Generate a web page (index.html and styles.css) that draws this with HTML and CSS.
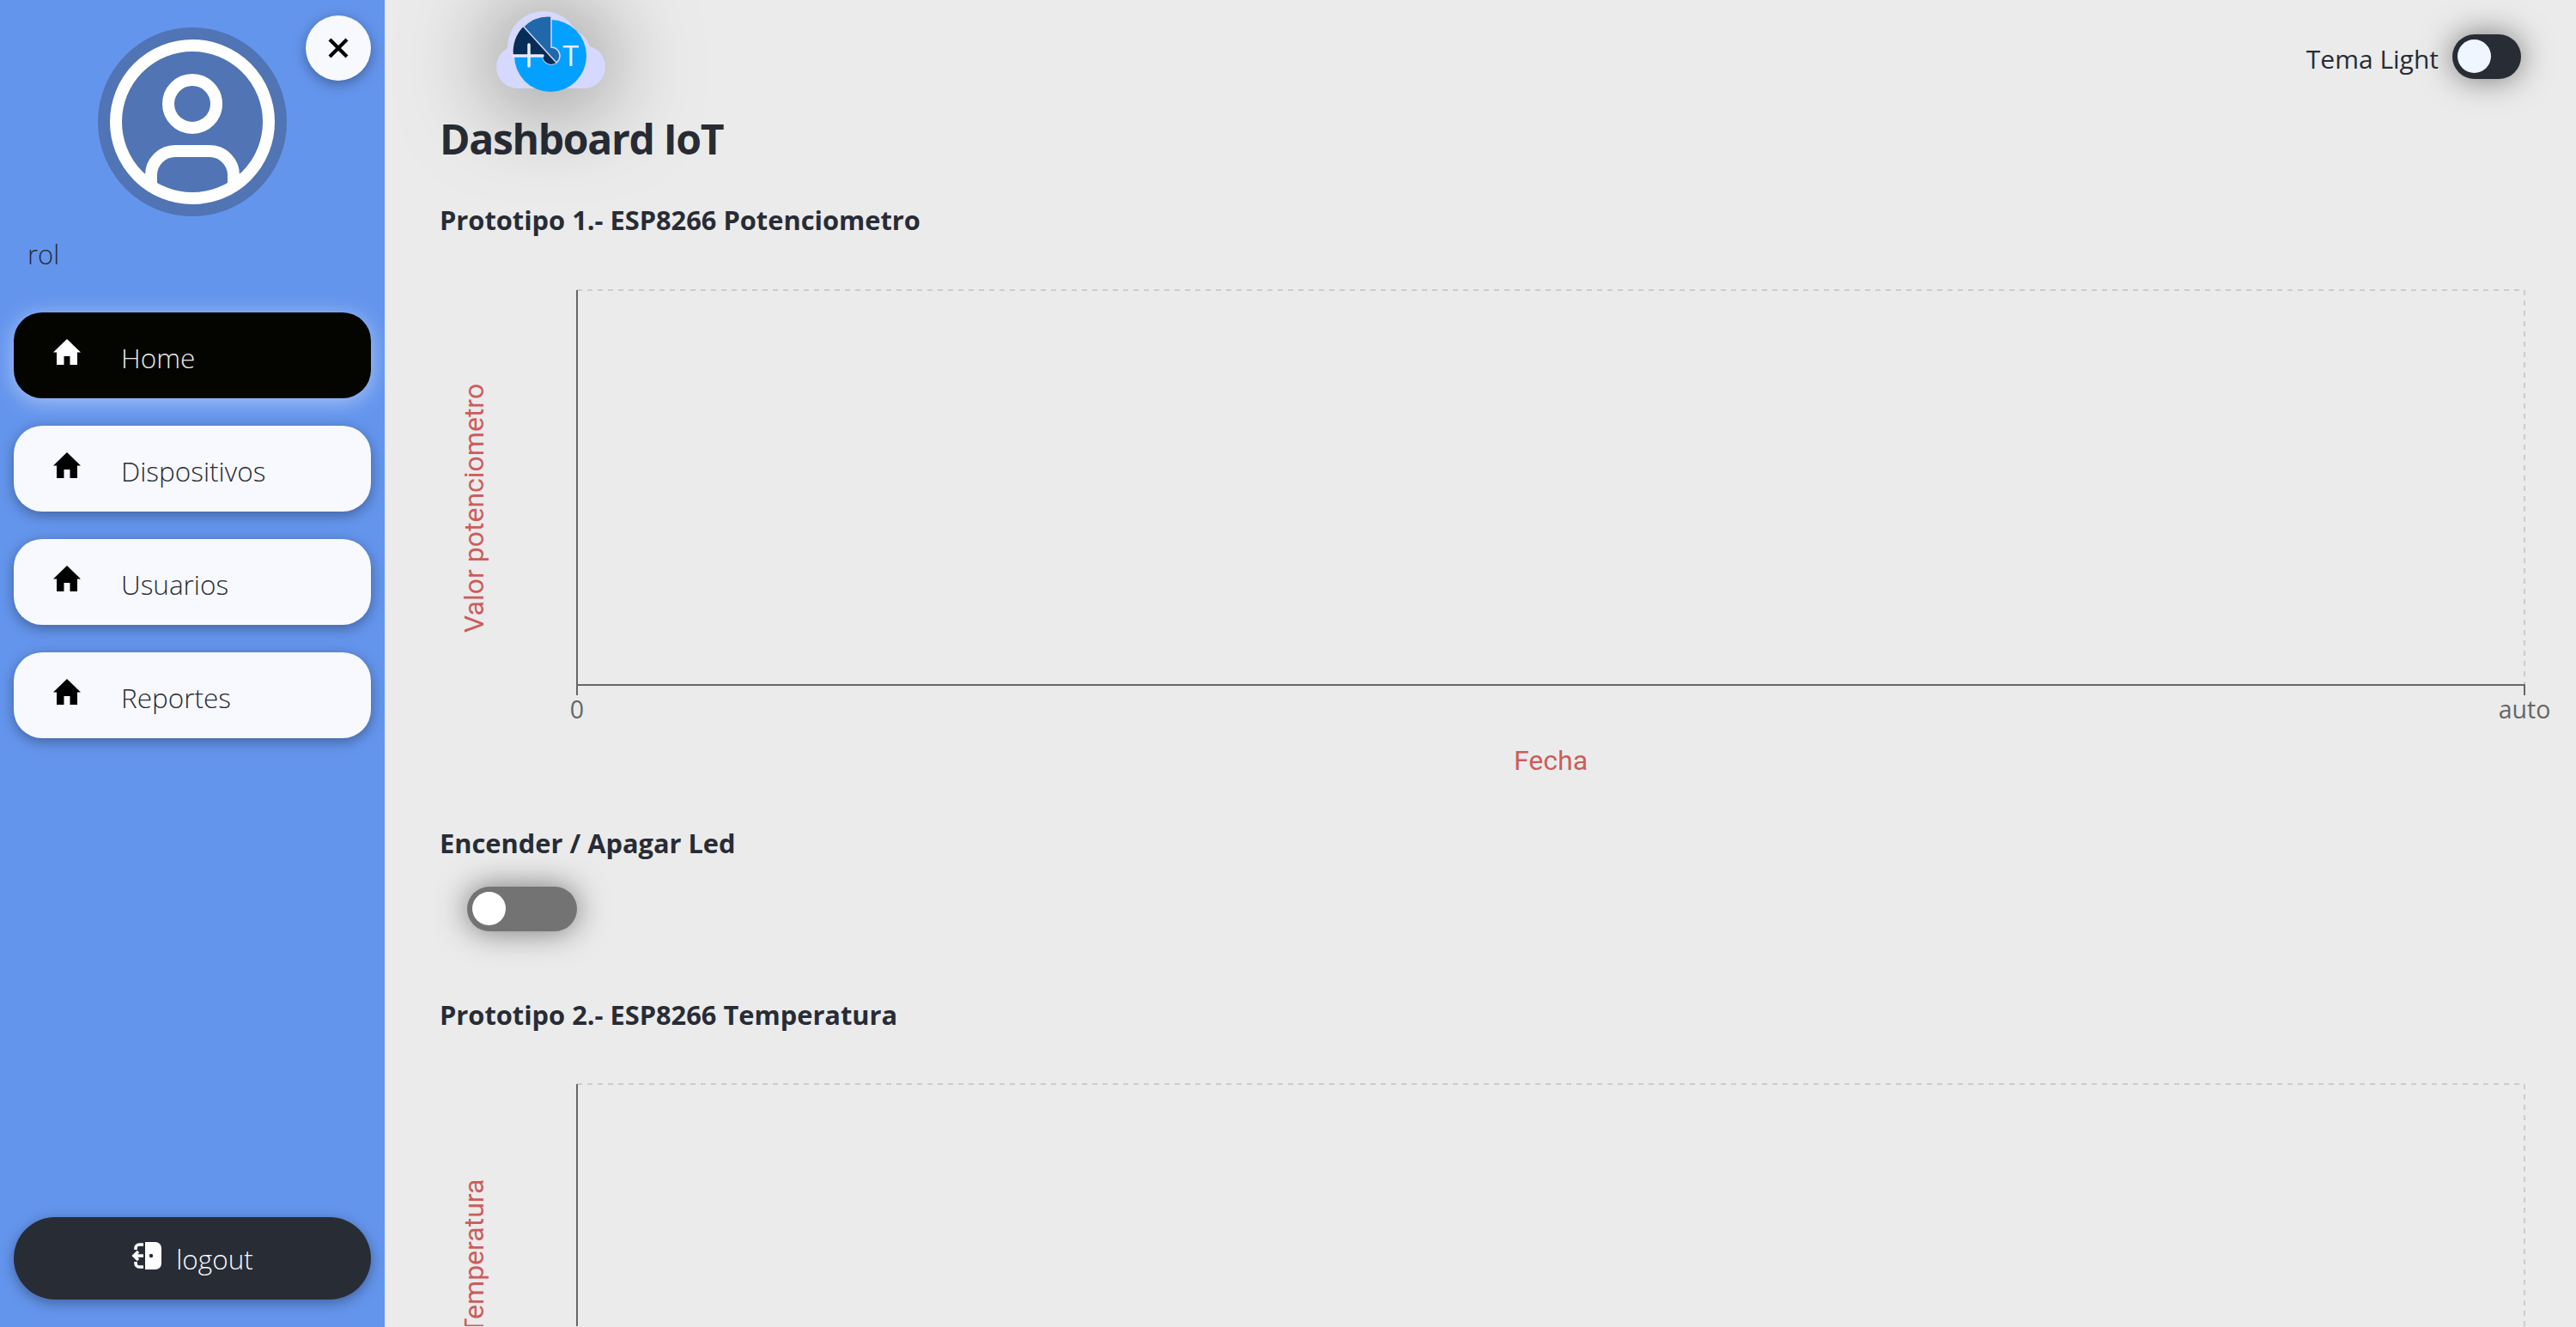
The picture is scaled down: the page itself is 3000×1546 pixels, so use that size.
FILE: index.html
```html
<!DOCTYPE html>
<html lang="es">

<head>
    <meta charset="UTF-8">
    <title>Dashboard IoT</title>
    <link rel="stylesheet" href="styles.css">
</head>

<body>
    <aside class="sidebar">
        <button class="close-btn" aria-label="Cerrar">
            <svg viewBox="0 0 24 24" width="24" height="24">
                <path d="M2 2 22 22M22 2 2 22" fill="none" stroke="#000" stroke-width="4.2" />
            </svg>
        </button>
        <svg class="avatar" viewBox="0 0 220 220">
            <circle cx="110" cy="110" r="110" fill="#5074b4" />
            <g fill="none" stroke="#fff" stroke-width="14">
                <circle cx="110" cy="110" r="89" />
                <circle cx="110" cy="89" r="28" />
                <path d="M62 182V172a28 28 0 0 1 28-28h40a28 28 0 0 1 28 28V182" />
            </g>
        </svg>
        <p class="role">rol</p>
        <nav class="menu">
            <a class="menu-item active" href="#">
                <svg class="home-icon" viewBox="0 0 32 32"><path d="M16 1 0 16.500h4V31h8.500V21h7v10H28V16.500h4Z" /></svg>
                Home
            </a>
            <a class="menu-item" href="#">
                <svg class="home-icon" viewBox="0 0 32 32"><path d="M16 1 0 16.500h4V31h8.500V21h7v10H28V16.500h4Z" /></svg>
                Dispositivos
            </a>
            <a class="menu-item" href="#">
                <svg class="home-icon" viewBox="0 0 32 32"><path d="M16 1 0 16.500h4V31h8.500V21h7v10H28V16.500h4Z" /></svg>
                Usuarios
            </a>
            <a class="menu-item" href="#">
                <svg class="home-icon" viewBox="0 0 32 32"><path d="M16 1 0 16.500h4V31h8.500V21h7v10H28V16.500h4Z" /></svg>
                Reportes
            </a>
        </nav>
        <button class="logout">
            <svg class="logout-icon" viewBox="0 0 36 32">
                <path d="M16 0h12a7 7 0 0 1 7 7v18a7 7 0 0 1-7 7H16Z" fill="#fff" />
                <circle cx="23" cy="16" r="2.200" fill="#282c35" />
                <path d="M14 16H4M8 11l-5 5 5 5M14 3H9a4 4 0 0 0-4 4v2M14 29H9a4 4 0 0 1-4-4v-2" fill="none" stroke="#fff" stroke-width="3.600" />
            </svg>
            logout
        </button>
    </aside>

    <main class="content">
        <header class="topbar">
            <svg class="logo" viewBox="565 5 150 110" width="150" height="110">
                <defs>
                    <clipPath id="logo-pie">
                        <path d="M642 19V55A10 10 0 1 1 632 65H598A41 41 0 0 1 642 19Z" />
                    </clipPath>
                </defs>
                <g fill="#d7d8ff">
                    <circle cx="633" cy="55" r="42" />
                    <circle cx="660" cy="62" r="28" />
                    <circle cx="603" cy="78" r="25" />
                    <circle cx="680" cy="78" r="25" />
                    <rect x="603" y="78" width="77" height="25" />
                </g>
                <circle cx="641" cy="65" r="42" fill="#04a0ff" />
                <path d="M642 19V55A10 10 0 1 1 632 65H598A41 41 0 0 1 642 19Z" fill="#2068a9" stroke="#d7d8ff" stroke-width="1.500" />
                <path d="M607 28 648 73 642 80H590V28Z" fill="#062d57" clip-path="url(#logo-pie)" />
                <path d="M607 28 648 73" stroke="#d7d8ff" stroke-width="1.500" />
                <path d="M616 52V77M598 65H632" stroke="#e8ecff" stroke-width="3.500" stroke-linecap="round" />
                <text class="logo-letter" x="655" y="77">T</text>
            </svg>
            <div class="theme-switch">
                <span class="theme-label">Tema Light</span>
                <span class="switch switch-theme"><span class="knob"></span></span>
            </div>
        </header>

        <h1>Dashboard IoT</h1>
        <h2 class="title-first">Prototipo 1.- ESP8266 Potenciometro</h2>
        <svg class="chart" viewBox="0 0 2468 630">
            <path class="grid" d="M160 38H2428V498" />
            <path class="axis" d="M160 38V510M160 498H2428V510" />
            <text class="tick" x="160" y="537">0</text>
            <text class="tick" x="2428" y="537">auto</text>
            <text class="axis-label" x="1294" y="597">Fecha</text>
            <text class="axis-label" transform="translate(51 292) rotate(-90)">Valor potenciometro</text>
        </svg>

        <h2 class="title-led">Encender / Apagar Led</h2>
        <span class="switch switch-led"><span class="knob"></span></span>

        <h2 class="title-second">Prototipo 2.- ESP8266 Temperatura</h2>
        <svg class="chart chart-second" viewBox="0 0 2468 320">
            <path class="grid" d="M160 38H2428V320" />
            <path class="axis" d="M160 38V320" />
            <text class="axis-label" transform="translate(51 239) rotate(-90)">Temperatura</text>
        </svg>
    </main>
</body>

</html>
```

FILE: styles.css
```css
* {
    box-sizing: border-box;
}

html {
    height: 100%;
    overflow: hidden;
}

body {
    margin: 0;
    height: 100%;
    display: flex;
    overflow: hidden;
    background: #ebebeb;
    color: #282c35;
    font-family: "Open Sans", sans-serif;
}

.sidebar {
    position: relative;
    width: 448px;
    flex-shrink: 0;
    display: flex;
    flex-direction: column;
    padding: 32px 16px;
    background: #6495ed;
}

.close-btn {
    position: absolute;
    top: 18px;
    right: 16px;
    width: 76px;
    height: 76px;
    display: flex;
    align-items: center;
    justify-content: center;
    padding: 0;
    border: 0;
    border-radius: 50%;
    background: #f8f9ff;
    box-shadow: 0 4px 16px rgba(0, 0, 0, .35);
}

.avatar {
    display: block;
    width: 220px;
    height: 220px;
    margin: 0 auto;
}

.role {
    margin: 24px 0 0 16px;
    font-size: 31px;
    font-weight: 300;
    line-height: 40px;
}

.menu {
    display: flex;
    flex-direction: column;
    gap: 32px;
    margin-top: 48px;
}

.menu-item {
    height: 100px;
    display: flex;
    align-items: center;
    gap: 47px;
    padding: 4px 0 0 46px;
    border-radius: 33px;
    background: #f8f9ff;
    color: #282c35;
    font-size: 31.5px;
    font-weight: 300;
    text-decoration: none;
    box-shadow: 0 4px 16px rgba(0, 0, 0, .35);
}

.menu-item.active {
    background: #050500;
    color: #eeeae0;
    box-shadow: 0 4px 24px rgba(255, 255, 255, .45);
}

.home-icon {
    width: 32px;
    height: 32px;
    margin-top: -13px;
    fill: #000;
}

.active .home-icon {
    fill: #fff;
}

.logout {
    height: 96px;
    display: flex;
    align-items: center;
    justify-content: center;
    gap: 16px;
    margin-top: auto;
    border: 0;
    border-radius: 48px;
    background: #282c35;
    color: #f8f9ff;
    font-family: inherit;
    font-size: 31.5px;
    font-weight: 300;
    box-shadow: 0 4px 16px rgba(0, 0, 0, .35);
}

.logout-icon {
    width: 36px;
    height: 32px;
    margin-top: -6px;
}

.content {
    flex: 1;
    min-width: 0;
    padding: 0 20px 0 64px;
}

.topbar {
    height: 133px;
    display: flex;
    justify-content: space-between;
    align-items: flex-start;
    padding: 5px 44px 0 53px;
}

.logo {
    display: block;
    filter: drop-shadow(0 4px 56px rgba(0, 0, 0, .6));
}

.logo-letter {
    font-family: Roboto, sans-serif;
    font-size: 33px;
    fill: #e8ecff;
}

.theme-switch {
    display: flex;
    align-items: center;
    gap: 16px;
    margin-top: 32px;
    font-size: 30px;
    line-height: 52px;
}

.theme-label {
    padding-top: 6px;
}

.switch {
    display: block;
    height: 52px;
    padding: 6px;
    border-radius: 26px;
}

.switch-theme {
    width: 80px;
    background: #282c35;
    box-shadow: 0 0 36px rgba(0, 0, 0, .5);
}

.switch-theme .knob {
    background: #f0f6ff;
}

.switch-led {
    width: 128px;
    margin: 31px 0 0 32px;
    background: #737373;
    box-shadow: 0 0 36px rgba(0, 0, 0, .5);
}

.knob {
    display: block;
    width: 39px;
    height: 39px;
    border-radius: 50%;
    background: #fff;
}

h1 {
    margin: 0;
    font-size: 48px;
    font-weight: 700;
    line-height: 58px;
    letter-spacing: -1.3px;
}

h2 {
    margin: 0;
    font-size: 30.8px;
    font-weight: 700;
    line-height: 40px;
}

.title-first {
    margin-top: 45px;
}

.title-led {
    margin-top: 32px;
}

.title-second {
    margin-top: 77px;
}

.chart {
    display: block;
    width: 100%;
    height: 630px;
    margin-top: 24px;
    overflow: visible;
}

.chart-second {
    height: 320px;
    margin-top: 23px;
    overflow: hidden;
}

.grid {
    fill: none;
    stroke: #ccc;
    stroke-width: 2;
    stroke-dasharray: 6 6;
}

.axis {
    fill: none;
    stroke: #666;
    stroke-width: 2;
}

.tick {
    fill: #666;
    font-size: 28.5px;
    text-anchor: middle;
}

.axis-label {
    fill: #cd5c5c;
    font-family: Roboto, sans-serif;
    font-size: 32px;
    text-anchor: middle;
}
```
